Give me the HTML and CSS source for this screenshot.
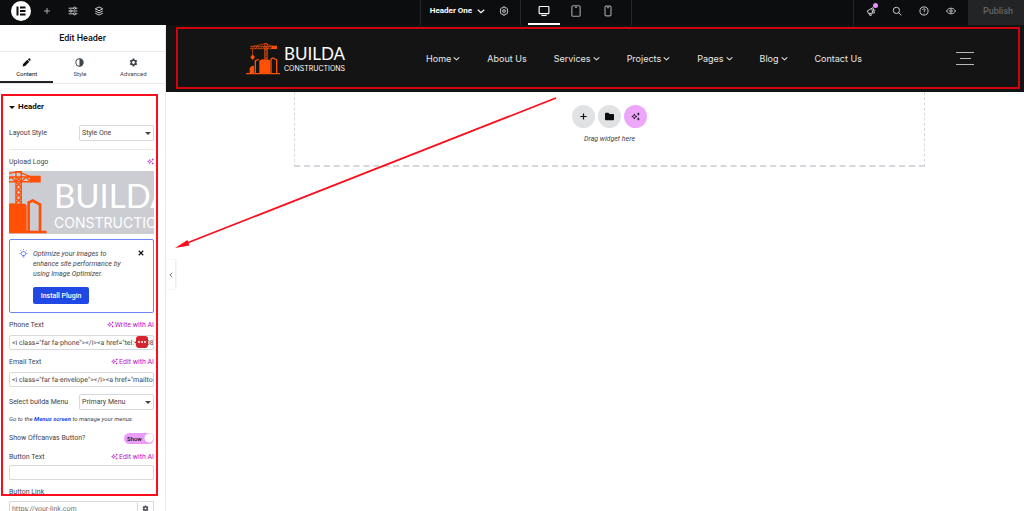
FILE: index.html
```html
<!DOCTYPE html>
<html lang="en">
<head>
<meta charset="utf-8">
<meta name="viewport" content="width=device-width, initial-scale=1">
<title>Edit Header</title>
<link rel="stylesheet" href="styles.css">
</head>
<body>
<svg class="defs" aria-hidden="true">
  <symbol id="sparkle" viewBox="0 0 16 16">
    <path d="M6 3.5c.5 3 1.500 4 4.500 4.500-3 .5-4 1.500-4.500 4.500-.5-3-1.500-4-4.500-4.500 3-.5 4-1.500 4.500-4.500z" fill="none" stroke="currentColor" stroke-width="1.600"/>
    <path d="M13 .5l.9 2.100 2.100.9-2.100.9L13 6.500l-.9-2.100-2.100-.9 2.100-.9zM13 9.500l.9 2.100 2.100.9-2.100.9-.9 2.100-.9-2.100-2.100-.9 2.100-.9z" fill="currentColor"/>
  </symbol>
  <symbol id="chev" viewBox="0 0 10 10"><path d="M1 3.500l4 3.500 4-3.500" fill="none" stroke="currentColor" stroke-width="1.500"/></symbol>
  <symbol id="cog" viewBox="0 0 16 16">
    <path fill="currentColor" fill-rule="evenodd" d="M6.500 1h3l.4 2 1.200.7 2-.7 1.500 2.600-1.500 1.400v2l1.500 1.400-1.500 2.600-2-.7-1.200.7-.4 2h-3l-.4-2-1.200-.7-2 .7-1.500-2.600L2.900 9V7L1.400 5.600 2.900 3l2 .7L6.100 3zM8 5.500a2.500 2.500 0 100 5 2.500 2.500 0 000-5z"/>
  </symbol>
  <symbol id="crane" viewBox="0 0 102 94">
    <g fill="none" stroke="#ff5005" stroke-width="2">
      <path d="M56 50V1h8v49M56 8l8 8-8 8 8 8-8 8 8 8M64 8l-8 8 8 8-8 8 8 8-8 8"/>
      <path d="M12 9h68M12 16h68M14 16l7-7 7 7 7-7 7 7 7-7 7 7M64 16l7-7 7 7M22 9L58 1l22 8M20 16v24"/>
      <path d="M28 90V52l10-4M75 90V47l6-3 11 6v40" stroke-width="4"/>
    </g>
    <path fill="#ff5005" d="M77 7h16v10H77zM17 36h6l4 6-7 8-7-8zM40 52l8-4 22 1 2 3v38H40zM11 90V74l5-5 8-2v23zM0 89h102v4H0z"/>
  </symbol>
</svg>

<div class="app">
  <header class="topbar">
    <div class="bar-left">
      <button class="brand" aria-label="Menu"><svg viewBox="0 0 20 20"><path d="M5.500 5.500h2v9h-2zM9 5.500h5.500v2H9zM9 9h5.500v2H9zM9 12.500h5.500v2H9z" fill="#0c0d0e"/></svg></button>
      <button class="tool" aria-label="Add element"><svg viewBox="0 0 16 16"><path d="M8 2v12M2 8h12"/></svg></button>
      <button class="tool" aria-label="Site settings"><svg viewBox="0 0 16 16"><path d="M1 3.500h8M12 3.500h3M1 8h2M6 8h9M1 12.500h8M12 12.500h3"/><circle cx="10.500" cy="3.500" r="1.700"/><circle cx="4.500" cy="8" r="1.700"/><circle cx="10.500" cy="12.500" r="1.700"/></svg></button>
      <button class="tool" aria-label="Structure"><svg viewBox="0 0 16 16"><path d="M8 1.500l6 3-6 3-6-3zM2 8l6 3 6-3M2 11.500l6 3 6-3"/></svg></button>
    </div>
    <div class="bar-mid">
      <button class="doc">Header One <svg class="chev"><use href="#chev"/></svg></button>
      <button class="tool gear" aria-label="Document settings"><svg viewBox="0 0 16 16"><path d="M6.500 1.500h3l.5 1.800 1.800-.5 1.800 1.900-.6 1.800 1.500 1.500-1.500 1.500.6 1.800-1.800 1.900-1.800-.5-.5 1.800h-3L6 12.700l-1.800.5-1.800-1.900.6-1.800L1.500 8 3 6.500l-.6-1.800 1.800-1.900 1.800.5z"/><circle cx="8" cy="8" r="2.200"/></svg></button>
      <div class="devices">
        <button class="device on" aria-label="Desktop"><svg viewBox="0 0 16 16"><rect x="1.500" y="2" width="13" height="9.500" rx="1"/><path d="M4.500 14h7"/></svg></button>
        <button class="device" aria-label="Tablet"><svg viewBox="0 0 16 16"><rect x="2.500" y="1" width="11" height="14" rx="1.500"/><path d="M6.500 3h3"/></svg></button>
        <button class="device" aria-label="Mobile"><svg viewBox="0 0 16 16"><rect x="4" y="1.500" width="8" height="13" rx="1.500"/><path d="M7 3.500h2"/></svg></button>
      </div>
    </div>
    <div class="bar-right">
      <button class="tool news" aria-label="What's new"><svg viewBox="0 0 16 16"><path d="M2 8l9-5.500 2.500 8.500L4 12zM5 12l1 3h2.500l-.8-3.300M9 3.500l2 7.500M13 5.500l1.500 2"/></svg></button>
      <button class="tool" aria-label="Finder"><svg viewBox="0 0 16 16"><circle cx="7" cy="7" r="5"/><path d="M10.500 10.500L15 15"/></svg></button>
      <button class="tool" aria-label="Help"><svg viewBox="0 0 16 16"><circle cx="8" cy="8" r="6.500"/><path d="M6 6.500C6 4 10 4 10 6.300 10 7.800 8 7.800 8 9.500M8 11v1"/></svg></button>
      <button class="tool" aria-label="Preview"><svg viewBox="0 0 16 16"><path d="M.8 8C4 2 12 2 15.200 8 12 14 4 14 .8 8z"/><circle cx="8" cy="8" r="2"/></svg></button>
      <button class="publish">Publish</button>
    </div>
  </header>

  <div class="work">
    <aside class="panel">
      <h1 class="panel-title">Edit Header</h1>
      <nav class="tabs">
        <button class="tab on"><svg viewBox="0 0 16 16"><path d="M1 15l1-4.500 7.500-7.500 3.500 3.500L5.500 14zM10.500 2l1.500-1.300c.5-.3 1-.3 1.500 0L15.300 2.500c.4.500.4 1 0 1.500L14 5.500z" fill="currentColor"/></svg>Content</button>
        <button class="tab"><svg viewBox="0 0 16 16"><circle cx="8" cy="8" r="6.500" fill="none" stroke="currentColor" stroke-width="1.800"/><path d="M8 1.500a6.500 6.500 0 010 13z" fill="currentColor"/></svg>Style</button>
        <button class="tab"><svg><use href="#cog"/></svg>Advanced</button>
      </nav>

      <form class="controls">
        <h2 class="section"><span class="caret"></span>Header</h2>
        <div class="row first">
          <label for="layout">Layout Style</label>
          <select id="layout"><option>Style One</option></select>
        </div>
        <div class="label-row media-label"><span>Upload Logo</span><svg class="spark"><use href="#sparkle"/></svg></div>
        <div class="thumb">
          <svg class="thumb-crane" viewBox="46 0 56 94"><use href="#crane" width="102" height="94"/></svg>
          <div class="thumb-words"><span class="thumb-name">BUILDA</span><span class="thumb-sub">CONSTRUCTIONS</span></div>
        </div>
        <div class="notice">
          <svg class="bulb" viewBox="0 0 16 16"><path d="M6 11.500C3 9.500 3.500 4.500 8 4.500s5 5 2 7zM6.500 14h3M8 .5V2M1 8h1.500M13.500 8H15M2.800 2.800l1.100 1.100M13.200 2.800l-1.100 1.100"/></svg>
          <div class="notice-body">
            <p>Optimize your images to enhance site performance by using Image Optimizer.</p>
            <button type="button" class="install">Install Plugin</button>
          </div>
          <button type="button" class="close" aria-label="Dismiss"><svg viewBox="0 0 8 8"><path d="M1 1l6 6M7 1L1 7"/></svg></button>
        </div>
        <div class="label-row"><label for="phone">Phone Text</label><button type="button" class="ai"><svg class="spark"><use href="#sparkle"/></svg>Write with AI</button></div>
        <div class="field">
          <input id="phone" type="text" value="&lt;i class=&quot;far fa-phone&quot;&gt;&lt;/i&gt;&lt;a href=&quot;tel:+8808">
          <span class="badge"><i></i><i></i><i></i></span>
        </div>
        <div class="label-row"><label for="email">Email Text</label><button type="button" class="ai"><svg class="spark"><use href="#sparkle"/></svg>Edit with AI</button></div>
        <div class="field"><input id="email" type="text" value="&lt;i class=&quot;far fa-envelope&quot;&gt;&lt;/i&gt;&lt;a href=&quot;mailto:"></div>
        <div class="row menu-row">
          <label for="menu">Select builda Menu</label>
          <select id="menu"><option>Primary Menu</option></select>
        </div>
        <p class="hint">Go to the <a href="#menus">Menus screen</a> to manage your menus.</p>
        <div class="toggle-row">
          <label for="offcanvas">Show Offcanvas Button?</label>
          <span class="switch"><input id="offcanvas" type="checkbox" checked><span>Show</span></span>
        </div>
        <div class="label-row"><label for="btext">Button Text</label><button type="button" class="ai"><svg class="spark"><use href="#sparkle"/></svg>Edit with AI</button></div>
        <div class="field"><input id="btext" type="text"></div>
        <div class="label-row last"><label for="blink">Button Link</label></div>
        <div class="field link"><input id="blink" type="text" placeholder="https://your-link.com"><button type="button" aria-label="Link options"><svg><use href="#cog"/></svg></button></div>
      </form>
      <div class="mark mark-panel"></div>
    </aside>

    <main class="stage">
      <header class="site">
        <a class="logo" href="#home">
          <svg><use href="#crane"/></svg>
          <span class="logo-words"><span class="logo-name">BUILDA</span><span class="logo-sub">CONSTRUCTIONS</span></span>
        </a>
        <nav class="menu">
          <a href="#home">Home<svg><use href="#chev"/></svg></a>
          <a href="#about">About Us</a>
          <a href="#services">Services<svg><use href="#chev"/></svg></a>
          <a href="#projects">Projects<svg><use href="#chev"/></svg></a>
          <a href="#pages">Pages<svg><use href="#chev"/></svg></a>
          <a href="#blog">Blog<svg><use href="#chev"/></svg></a>
          <a href="#contact">Contact Us</a>
        </nav>
        <button class="burger" aria-label="Open menu"><i></i><i></i><i></i></button>
        <div class="mark mark-site"></div>
      </header>
      <section class="drop">
        <div class="drop-buttons">
          <button aria-label="Add container"><svg viewBox="0 0 16 16"><path d="M8 2.500v11M2.500 8h11" stroke="currentColor" stroke-width="2.200"/></svg></button>
          <button aria-label="Add template"><svg viewBox="0 0 16 16"><path d="M0 3c0-1 .5-1.500 1.500-1.500H6l2 2h6.500c1 0 1.500.5 1.500 1.500v8c0 1-.5 1.500-1.500 1.500h-13C.5 14.500 0 14 0 13z" fill="currentColor"/></svg></button>
          <button class="pink" aria-label="Build with AI"><svg><use href="#sparkle"/></svg></button>
        </div>
        <p>Drag widget here</p>
      </section>
      <button class="collapse" aria-label="Hide panel"><svg viewBox="0 0 8 8"><path d="M5.500 1L2.500 4l3 3"/></svg></button>
      <svg class="arrow" viewBox="0 0 382 152"><path d="M381 1L12 146" stroke="#fc0d1b" stroke-width="1.800"/><path d="M0 151l12.500-8 2 5.500z" fill="#fc0d1b"/></svg>
    </main>
  </div>
</div>
</body>
</html>
```
FILE: styles.css
```css
* { box-sizing: border-box; }
body { margin: 0; background: #fff; color: #3f444b; font: 7px/10px Roboto, "Liberation Sans", sans-serif; }
button, input, select { font: inherit; color: inherit; margin: 0; }
button { border: 0; padding: 0; background: none; display: flex; align-items: center; justify-content: center; }
h1, h2, p { margin: 0; }
a { text-decoration: none; color: inherit; }
svg { display: block; flex: none; }
.defs { position: absolute; width: 0; height: 0; }
.app { height: 100vh; display: flex; flex-direction: column; overflow: hidden; }

/* top bar */
.topbar { flex: none; height: 25px; display: grid; grid-template-columns: 41% auto 1fr; background: #0c0d0e; color: #d5d8dc; }
.topbar > div { display: flex; align-items: stretch; height: 25px; }
.topbar svg { fill: none; stroke: currentColor; stroke-width: 1.5; }
.bar-left { padding: 0 0 3px 11px; gap: 6px; }
.brand { width: 20px; height: 20px; margin: 1px 0; border-radius: 50%; background: #fff; }
.topbar .brand svg { width: 20px; height: 20px; stroke: none; }
.tool { width: 20px; }
.tool svg { width: 10px; height: 10px; }
.bar-left .tool:nth-child(2) svg { width: 8px; height: 8px; }
.bar-mid { border: solid #25272a; border-width: 0 1px; }
.bar-mid > button, .bar-right > .tool { padding-bottom: 3px; }
.doc { padding-left: 9px; gap: 5px; font-size: 8px; font-weight: 700; color: #fff; }
.topbar .chev { width: 8px; height: 8px; stroke: none; }
.gear { margin-left: 9px; }
.devices { display: flex; margin-left: 6px; padding: 0 7px; border-left: 1px solid #25272a; }
.device { width: 32px; padding-bottom: 1px; border-bottom: 2px solid transparent; color: #9da5ae; }
.device svg { width: 12px; height: 12px; }
.device.on { border-color: #fff; color: #fff; }
.bar-right { justify-content: flex-end; gap: 7px; }
.bar-right .news { position: relative; width: 27px; border-left: 1px solid #25272a; padding-left: 7px; }
.news::after { content: ""; position: absolute; top: 3px; right: 2px; width: 5px; height: 5px; border-radius: 50%; background: #eb8efb; }
.publish { width: 56px; padding-bottom: 3px; padding-left: 4px; background: #232426; color: #626467; font-size: 9px; font-weight: 500; }

.work { flex: 1; display: flex; min-height: 0; }

/* panel */
.panel { position: relative; flex: none; width: 166px; border-right: 1px solid #e9eaec; overflow: hidden; }
.panel-title { height: 27px; border-bottom: 1px solid #e6e8ea; color: #0c0d0e; font-size: 9px; line-height: 26px; font-weight: 500; text-align: center; }
.tabs { display: grid; grid-template-columns: repeat(3, 1fr); height: 32px; padding-right: 5px; border-bottom: 1px solid #e6e8ea; }
.tab { flex-direction: column; gap: 2px; padding-top: 4px; border-bottom: 2px solid transparent; font-size: 6px; font-weight: 400; }
.tab svg { width: 9px; height: 9px; }
.tab.on { color: #0c0d0e; border-color: #1f2124; }
.controls { padding: 0 11px 0 9px; }
.section { display: flex; align-items: center; gap: 3px; height: 41px; padding-top: 5px; color: #0c0d0e; font-size: 8px; font-weight: 700; }
.caret { border: 3px solid transparent; border-top: 3px solid #0c0d0e; border-bottom: 0; }
.row { position: relative; display: grid; grid-template-columns: 1fr 75px; align-items: center; }
.row::after { content: ""; position: absolute; right: 3px; top: 7px; border: 3px solid transparent; border-top: 3px solid #3f444b; border-bottom: 0; }
.row.first { height: 25px; border-bottom: 1px solid #e6e8ea; padding-bottom: 8px; }
select { width: 75px; height: 16px; padding: 0 2px; border: 1px solid #d5d8dc; border-radius: 2px; appearance: none; background: #fff; }
.label-row, .toggle-row { display: flex; align-items: center; justify-content: space-between; height: 22px; padding-top: 1px; }
.media-label { height: 21px; padding-top: 2px; }
.spark { width: 7px; height: 7px; color: #c00bc9; }
.ai { gap: 1px; color: #c00bc9; }
.thumb { display: flex; height: 63px; overflow: hidden; background: #cbcdd2; color: #fff; }
.thumb-crane { width: 38px; height: 63px; margin-right: 7px; }
.thumb-words { flex: none; padding-top: 8px; }
.thumb-words span { display: block; white-space: nowrap; }
.thumb-name { font: 33px/33px Lato, sans-serif; }
.thumb-sub { font: 14px/22px Inter, sans-serif; }
.notice { display: flex; margin-top: 5px; height: 74px; padding: 9px 9px 0; border: 1px solid #6b87f5; border-radius: 2px; }
.bulb { width: 9px; height: 9px; fill: none; stroke: #3b5ff0; stroke-width: 1.5; }
.notice-body { flex: 1; padding-left: 5px; }
.notice p { max-width: 94px; font-style: italic; color: #3f444b; }
.install { width: 56px; height: 17px; margin-top: 8px; border-radius: 2px; background: #1f48e4; color: #fff; font-weight: 500; }
.close { align-self: flex-start; margin-top: 1px; }
.close svg { width: 6px; height: 6px; stroke: #0c0d0e; stroke-width: 1.5; }
.field { position: relative; display: flex; height: 15px; }
.field input { flex: 1; min-width: 0; height: 15px; padding: 0 0 0 2px; border: 1px solid #d5d8dc; border-radius: 2px; background: #fff; text-rendering: geometricPrecision; }
.field input::placeholder { color: #69727d; opacity: 1; }
.badge { position: absolute; right: 6px; top: 1px; width: 12px; height: 12px; border-radius: 3px; background: #d3252d; display: flex; align-items: center; justify-content: center; gap: 1px; }
.badge i { width: 2px; height: 2px; background: #fff; border-radius: 50%; }
.menu-row { margin-top: 7px; }
.hint { margin-top: 4px; font-size: 6px; line-height: 10px; font-style: italic; white-space: nowrap; }
.hint a { color: #1f48e4; font-weight: 700; }
.toggle-row { height: 20px; margin-top: 4px; padding: 0; }
.switch { position: relative; display: flex; width: 30px; height: 11px; }
.switch input { appearance: none; width: 30px; height: 11px; border-radius: 6px; background: radial-gradient(circle at 25px 5px, #fff 4px, transparent 5px), #eb9cf9; }
.switch span { position: absolute; left: 3px; top: 0; font-size: 6px; line-height: 11px; font-weight: 500; color: #0c0d0e; pointer-events: none; }
.toggle-row + .label-row { height: 17px; padding: 0; }
.label-row.last { height: 21px; padding-top: 3px; }
.link button { width: 16px; height: 15px; border: 1px solid #d5d8dc; border-left: 0; }
.link button svg { width: 7px; height: 7px; }

/* canvas */
.stage { position: relative; flex: 1; min-width: 0; }
.site { position: relative; display: flex; align-items: center; height: 67px; padding: 0 50px 0 80px; background: #141414; color: #e8e8e8; }
.logo { display: flex; gap: 4px; align-items: center; color: #fff; }
.logo svg { width: 34px; height: 32px; }
.logo-words span { display: block; }
.logo-name { font: 17px/20px Lato, sans-serif; }
.logo-sub { font: 7px/9px Inter, sans-serif; }
.menu { display: flex; gap: 27px; margin-left: 81px; font: 9px/12px Inter, sans-serif; white-space: nowrap; }
.menu a { display: flex; align-items: center; gap: 2px; }
.menu svg { width: 7px; height: 7px; }
.burger { flex-direction: column; gap: 5px; margin-left: auto; }
.burger i { width: 18px; height: 1px; background: #b9b9b9; }
.burger i:nth-child(2) { width: 11px; }
.drop { margin: 0 99px 0 128px; height: 75px; padding-top: 13px; border: dashed #d5d8dc; border-width: 0 1px 2px; font-size: 7px; font-style: italic; text-align: center; }
.drop-buttons { display: flex; justify-content: center; gap: 3px; margin-bottom: 6px; }
.drop button { width: 23px; height: 23px; border-radius: 50%; background: #e1e2e4; color: #0c0d0e; }
.drop button svg { width: 9px; height: 9px; }
.drop .pink { background: #eea6fb; }
.collapse { position: absolute; left: 0; top: 235px; width: 9px; height: 29px; background: #fff; box-shadow: 1px 0 2px #e1e3e6; }
.collapse svg { width: 6px; height: 6px; fill: none; stroke: #3f444b; }

/* callouts */
.arrow { position: absolute; left: 9px; top: 72px; width: 382px; height: 152px; pointer-events: none; }
.mark { position: absolute; pointer-events: none; border: 2px solid #fc0d1b; }
.mark-panel { left: 1px; top: 69px; width: 157px; height: 402px; }
.mark-site { left: 10px; right: 4px; top: 2px; bottom: 3px; border-color: #d0040e; }
```
